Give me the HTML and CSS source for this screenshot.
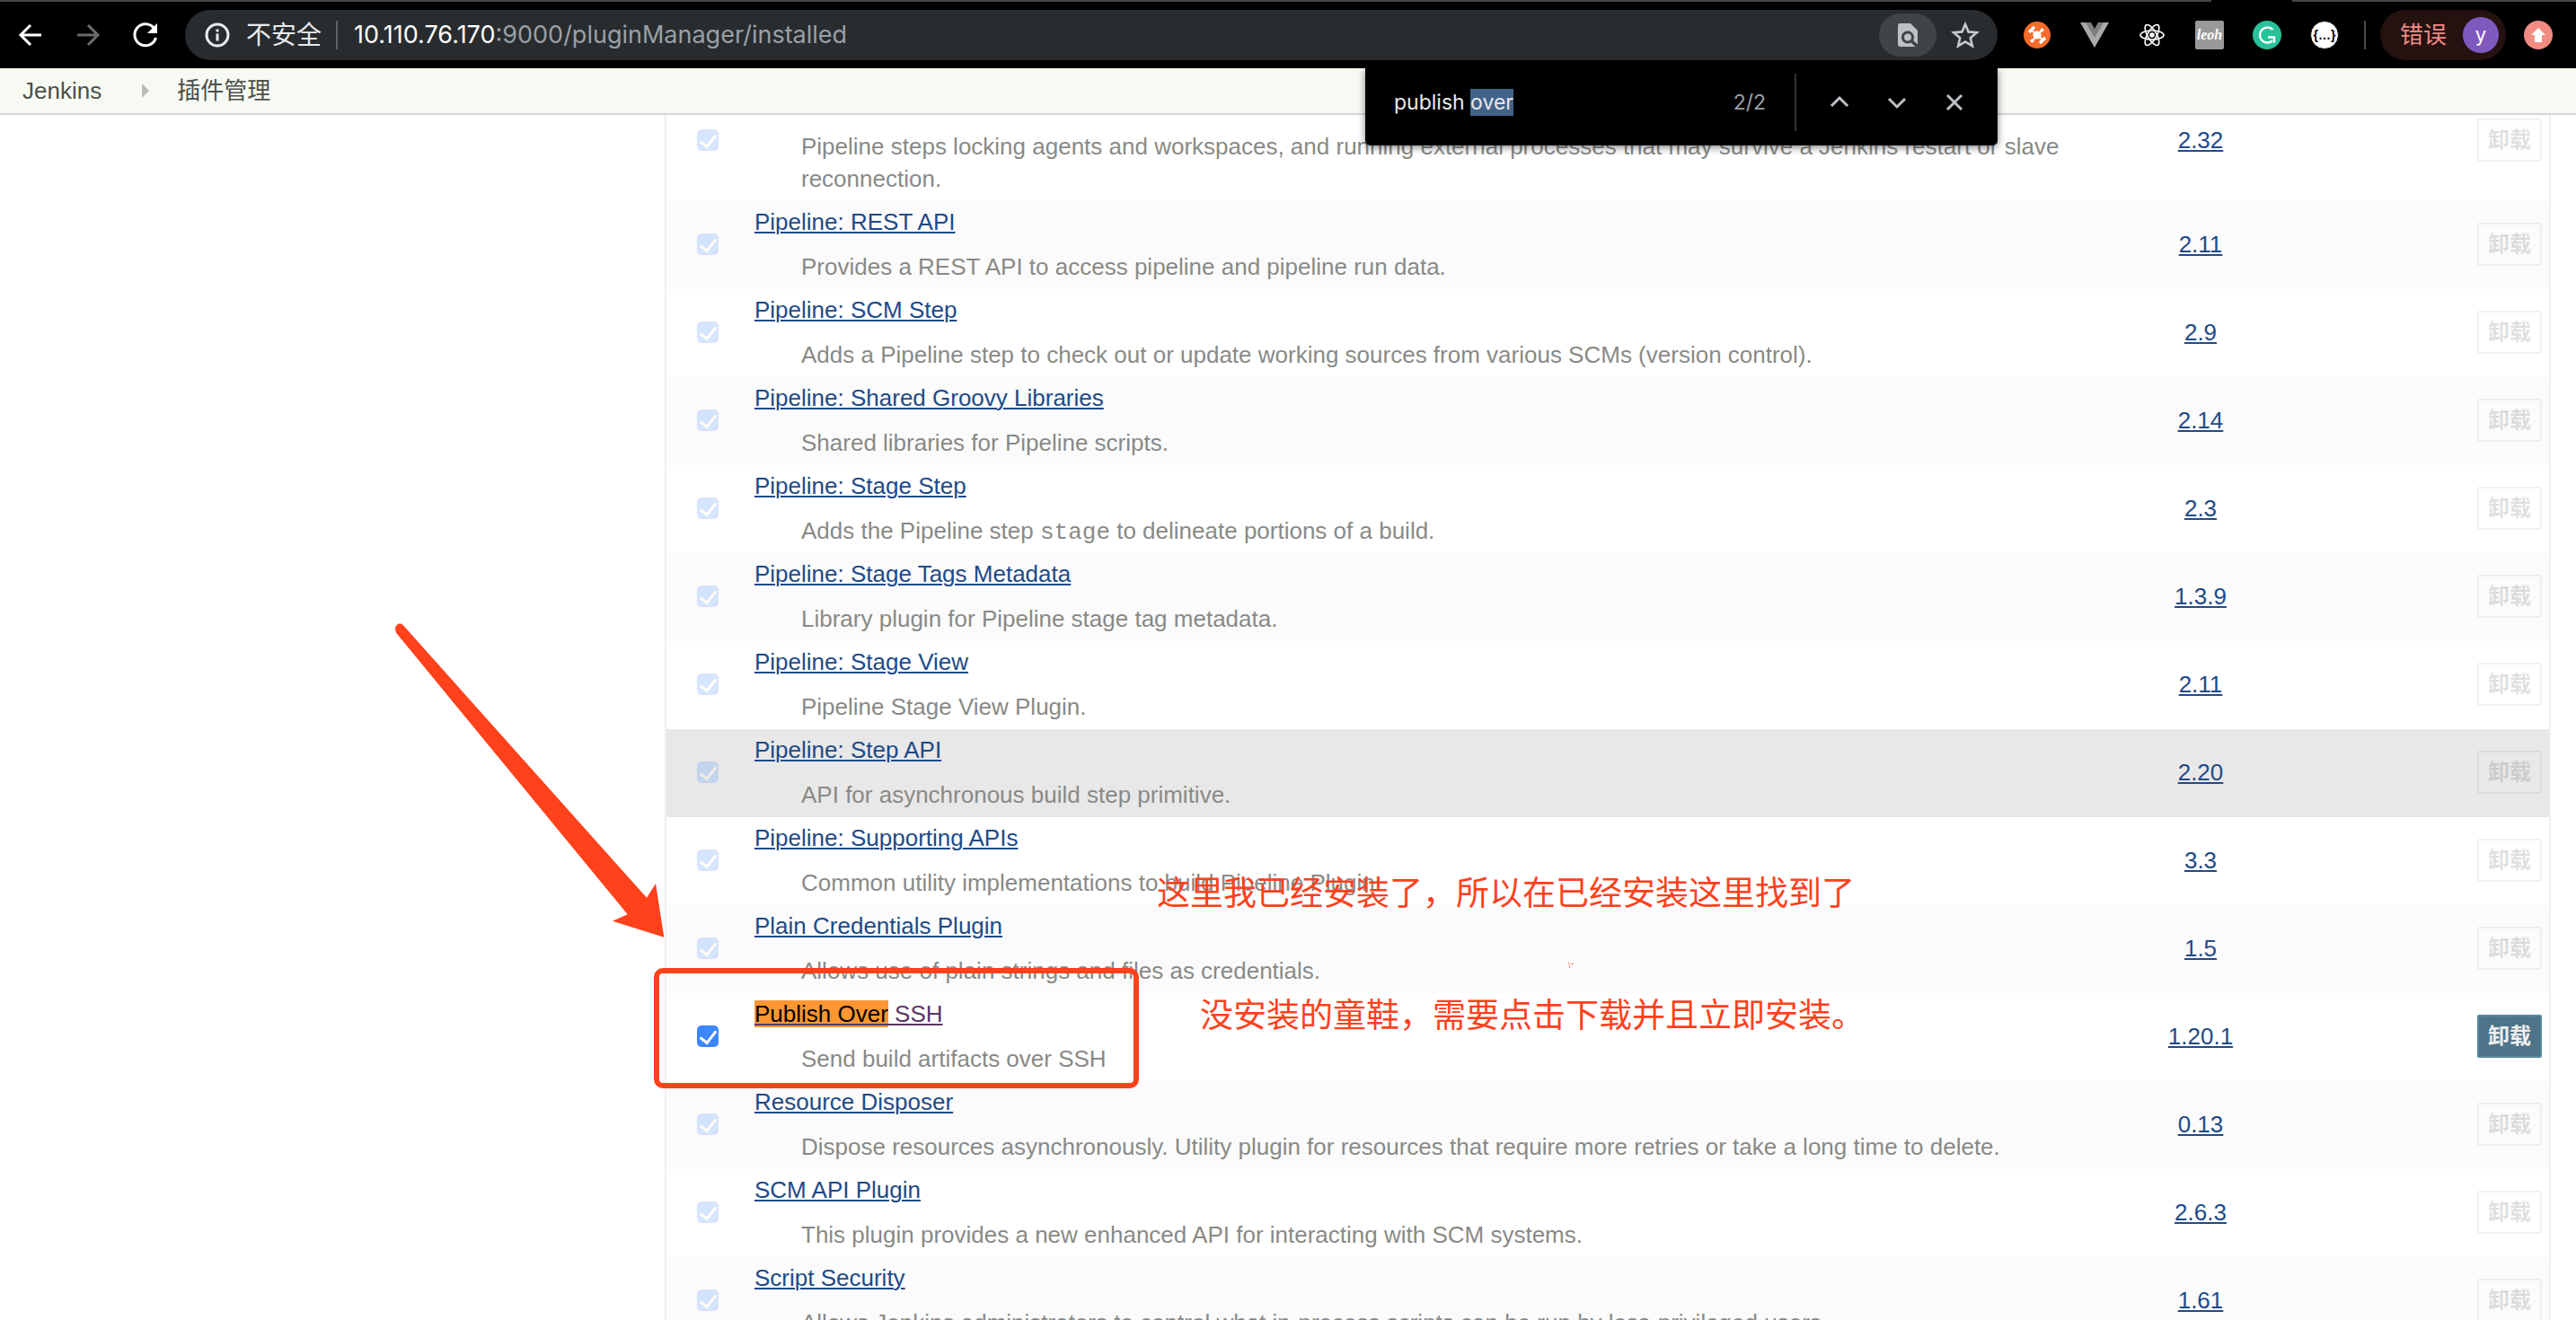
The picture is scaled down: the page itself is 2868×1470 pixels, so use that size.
FILE: index.html
```html
<!DOCTYPE html>
<html lang="zh-CN">
<head>
<meta charset="utf-8">
<title>插件管理 [Jenkins]</title>
<link rel="stylesheet" href="styles.css">
</head>
<body>
<header class="toolbar">
  <span class="tab-foot"></span>
  <nav class="nav">
    <button class="icon-btn" aria-label="Back"><svg width="32" height="32" viewBox="0 0 32 32" fill="none" stroke="#fff" stroke-width="3"><path d="M28 16H6M16 5L5 16l11 11"/></svg></button>
    <button class="icon-btn" aria-label="Forward"><svg width="32" height="32" viewBox="0 0 32 32" fill="none" stroke="#6b6b6b" stroke-width="3"><path d="M4 16h22M16 5l11 11-11 11"/></svg></button>
    <button class="icon-btn" aria-label="Reload"><svg width="32" height="32" viewBox="0 0 32 32"><path d="M25.500 8.500A12 12 0 1 0 27.500 19" fill="none" stroke="#fff" stroke-width="3"/><path d="M29 3v11H18z" fill="#fff"/></svg></button>
  </nav>
  <div class="omnibox">
    <svg width="28" height="28" viewBox="0 0 28 28" fill="none" stroke="#e8eaed" stroke-width="3"><circle cx="14" cy="14" r="12"/><path d="M14 12.500v8M14 7.500v3"/></svg>
    <span class="insecure">不安全</span>
    <span class="omni-rule"></span>
    <div class="url" role="textbox" aria-label="Address"><b>10.110.76.170</b>:9000/pluginManager/installed</div>
    <button class="find-chip" aria-label="Find in page"><svg width="32" height="32" viewBox="0 0 32 32"><path d="M8 3h11l8 8v15.500L22 22a7 7 0 1 0-2.500 2.500L24.500 29H8a3 3 0 0 1-3-3V6a3 3 0 0 1 3-3z" fill="#bdc1c6"/><circle cx="16" cy="18.500" r="4" fill="#bdc1c6"/></svg></button>
    <button class="icon-btn" aria-label="Bookmark"><svg width="32" height="32" viewBox="0 0 32 32" fill="none" stroke="#c6c9cc" stroke-width="2.600"><path d="M16 4l3.600 8.400 9.200.8-7 6 2.100 9L16 23.400l-7.900 4.800 2.100-9-7-6 9.200-.8z"/></svg></button>
  </div>
  <div class="extensions">
    <button class="icon-btn" aria-label="Orange hub"><svg width="32" height="32" viewBox="0 0 32 32"><circle cx="16" cy="16" r="15" fill="#f76b2c"/><g stroke="#fff" fill="none"><path d="M9 10l14 12M21 11l-10 11" stroke-width="2"/><path d="M7 13l6-6M19 25l6-6" stroke-width="3.500"/></g><g fill="#fff"><circle cx="16" cy="16" r="4.600"/><circle cx="21.500" cy="10.500" r="2"/><circle cx="10.500" cy="22.500" r="2"/></g></svg></button>
    <button class="icon-btn" aria-label="Vue"><svg width="32" height="32" viewBox="0 0 32 32"><path d="M0 2h32L16 30z" fill="#a9a9a9"/><path d="M6 2h20L16 19z" fill="#7d7d7d"/><path d="M12 2h8l-4 7z" fill="#000"/></svg></button>
    <button class="icon-btn" aria-label="React"><svg width="32" height="32" viewBox="0 0 32 32" fill="none" stroke="#fff" stroke-width="1.600"><ellipse cx="16" cy="16" rx="13" ry="5"/><ellipse cx="16" cy="16" rx="13" ry="5" transform="rotate(60 16 16)"/><ellipse cx="16" cy="16" rx="13" ry="5" transform="rotate(120 16 16)"/><circle cx="16" cy="16" r="2" fill="#fff"/></svg></button>
    <button class="icon-btn leoh">leoh</button>
    <button class="icon-btn" aria-label="Grammarly"><svg width="32" height="32" viewBox="0 0 32 32"><circle cx="16" cy="16" r="16" fill="#27c29b"/><path d="M22.500 10A8.500 8.500 0 1 0 22 22.500M17 18.500h7v6" fill="none" stroke="#fff" stroke-width="2.400"/></svg></button>
    <button class="icon-btn json">{…}</button>
  </div>
  <span class="bar-rule"></span>
  <button class="profile"><span>错误</span><span class="avatar">y</span></button>
  <button class="icon-btn update" aria-label="Update"><svg width="32" height="32" viewBox="0 0 32 32"><circle cx="16" cy="16" r="16" fill="#f28b82"/><path d="M16 8l8 8h-4v8h-8v-8H8z" fill="#fff"/></svg></button>

  <form class="findbar">
    <input class="find-input" type="text" value="publish over" aria-label="Find">
    <span class="find-count">2/2</span>
    <span class="find-rule"></span>
    <button type="button" class="icon-btn" aria-label="Previous"><svg width="32" height="32" viewBox="0 0 32 32" fill="none" stroke="#bdc1c6" stroke-width="3"><path d="M7 20l9-9 9 9"/></svg></button>
    <button type="button" class="icon-btn" aria-label="Next"><svg width="32" height="32" viewBox="0 0 32 32" fill="none" stroke="#bdc1c6" stroke-width="3"><path d="M7 12l9 9 9-9"/></svg></button>
    <button type="button" class="icon-btn" aria-label="Close"><svg width="32" height="32" viewBox="0 0 32 32" fill="none" stroke="#bdc1c6" stroke-width="3"><path d="M8 8l16 16M24 8L8 24"/></svg></button>
  </form>
</header>

<nav class="breadcrumbs">
  <a href="#">Jenkins</a>
  <svg width="8" height="16" viewBox="0 0 8 16"><path d="M0 0l8 8-8 8z" fill="#babdb6"/></svg>
  <a href="#">插件管理</a>
</nav>

<main class="page">
  <aside class="side"></aside>
  <table class="plugins">
    <colgroup><col class="c-check"><col><col class="c-version"><col class="c-previous"><col class="c-action"></colgroup>
    <tbody>
      <tr><td><input type="checkbox" checked disabled aria-label="Pipeline: Nodes and Processes"></td><td><a href="#">Pipeline: Nodes and Processes</a><p>Pipeline steps locking agents and workspaces, and running external processes that may survive a Jenkins restart or slave reconnection.</p></td><td class="version"><a href="#">2.32</a></td><td></td><td><button class="uninstall" disabled>卸载</button></td></tr>
      <tr><td><input type="checkbox" checked disabled aria-label="Pipeline: REST API"></td><td><a href="#">Pipeline: REST API</a><p>Provides a REST API to access pipeline and pipeline run data.</p></td><td class="version"><a href="#">2.11</a></td><td></td><td><button class="uninstall" disabled>卸载</button></td></tr>
      <tr><td><input type="checkbox" checked disabled aria-label="Pipeline: SCM Step"></td><td><a href="#">Pipeline: SCM Step</a><p>Adds a Pipeline step to check out or update working sources from various SCMs (version control).</p></td><td class="version"><a href="#">2.9</a></td><td></td><td><button class="uninstall" disabled>卸载</button></td></tr>
      <tr><td><input type="checkbox" checked disabled aria-label="Pipeline: Shared Groovy Libraries"></td><td><a href="#">Pipeline: Shared Groovy Libraries</a><p>Shared libraries for Pipeline scripts.</p></td><td class="version"><a href="#">2.14</a></td><td></td><td><button class="uninstall" disabled>卸载</button></td></tr>
      <tr><td><input type="checkbox" checked disabled aria-label="Pipeline: Stage Step"></td><td><a href="#">Pipeline: Stage Step</a><p>Adds the Pipeline step <code>stage</code> to delineate portions of a build.</p></td><td class="version"><a href="#">2.3</a></td><td></td><td><button class="uninstall" disabled>卸载</button></td></tr>
      <tr><td><input type="checkbox" checked disabled aria-label="Pipeline: Stage Tags Metadata"></td><td><a href="#">Pipeline: Stage Tags Metadata</a><p>Library plugin for Pipeline stage tag metadata.</p></td><td class="version"><a href="#">1.3.9</a></td><td></td><td><button class="uninstall" disabled>卸载</button></td></tr>
      <tr><td><input type="checkbox" checked disabled aria-label="Pipeline: Stage View"></td><td><a href="#">Pipeline: Stage View</a><p>Pipeline Stage View Plugin.</p></td><td class="version"><a href="#">2.11</a></td><td></td><td><button class="uninstall" disabled>卸载</button></td></tr>
      <tr class="hovered"><td><input type="checkbox" checked disabled aria-label="Pipeline: Step API"></td><td><a href="#">Pipeline: Step API</a><p>API for asynchronous build step primitive.</p></td><td class="version"><a href="#">2.20</a></td><td></td><td><button class="uninstall" disabled>卸载</button></td></tr>
      <tr><td><input type="checkbox" checked disabled aria-label="Pipeline: Supporting APIs"></td><td><a href="#">Pipeline: Supporting APIs</a><p>Common utility implementations to build Pipeline Plugin</p></td><td class="version"><a href="#">3.3</a></td><td></td><td><button class="uninstall" disabled>卸载</button></td></tr>
      <tr><td><input type="checkbox" checked disabled aria-label="Plain Credentials Plugin"></td><td><a href="#">Plain Credentials Plugin</a><p>Allows use of plain strings and files as credentials.</p></td><td class="version"><a href="#">1.5</a></td><td></td><td><button class="uninstall" disabled>卸载</button></td></tr>
      <tr><td><input type="checkbox" checked aria-label="Publish Over SSH"></td><td><a class="seen" href="#"><mark>Publish Over</mark> SSH</a><p>Send build artifacts over SSH</p></td><td class="version"><a href="#">1.20.1</a></td><td></td><td><button class="uninstall">卸载</button></td></tr>
      <tr><td><input type="checkbox" checked disabled aria-label="Resource Disposer"></td><td><a href="#">Resource Disposer</a><p>Dispose resources asynchronously. Utility plugin for resources that require more retries or take a long time to delete.</p></td><td class="version"><a href="#">0.13</a></td><td></td><td><button class="uninstall" disabled>卸载</button></td></tr>
      <tr><td><input type="checkbox" checked disabled aria-label="SCM API Plugin"></td><td><a href="#">SCM API Plugin</a><p>This plugin provides a new enhanced API for interacting with SCM systems.</p></td><td class="version"><a href="#">2.6.3</a></td><td></td><td><button class="uninstall" disabled>卸载</button></td></tr>
      <tr><td><input type="checkbox" checked disabled aria-label="Script Security"></td><td><a href="#">Script Security</a><p>Allows Jenkins administrators to control what in-process scripts can be run by less-privileged users.</p></td><td class="version"><a href="#">1.61</a></td><td></td><td><button class="uninstall" disabled>卸载</button></td></tr>
    </tbody>
  </table>
</main>

<svg class="arrow" width="300" height="350" viewBox="0 0 300 350"><path d="M9.300 6.700L280 309.700l10-15.700 9.300 59.700L242 335.700l16.700-7.400L1.700 15.500C-3 8 4 1 9.300 6.700z" fill="#ff411c"/></svg>
<div class="frame"></div>
<svg class="speck" width="6" height="6" viewBox="0 0 6 6" fill="none" stroke="#ff8a70"><path d="M.5 0v2M1.500 3v3M3 1.500h3" /></svg>
<p class="note note-a">这里我已经安装了，所以在已经安装这里找到了</p>
<p class="note note-b">没安装的童鞋，需要点击下载并且立即安装。</p>

<script src="find.js"></script>
</body>
</html>
```
FILE: styles.css
```css
* { box-sizing: border-box; }
body {
  margin: 0;
  height: 100vh;
  overflow: hidden;
  position: relative;
  display: flex;
  flex-direction: column;
  background: #fff;
  font: 26px/36px "Liberation Sans", "Noto Sans CJK SC", sans-serif;
}
button { font: inherit; border: 0; background: none; padding: 0; }
svg { display: block; flex: none; overflow: visible; }

/* browser toolbar */
.toolbar {
  position: relative;
  z-index: 3;
  display: flex;
  align-items: center;
  flex: none;
  height: 76px;
  padding: 0 26px 0 18px;
  background: #000;
  border-top: 2px solid #454545;
  font-family: Inter, "Noto Sans CJK SC", sans-serif;
}
.tab-foot { position: absolute; top: -2px; right: 316px; width: 90px; height: 2px; background: #000; }
.nav { display: flex; gap: 32px; }
.icon-btn { flex: none; width: 32px; height: 32px; }
.omnibox {
  flex: 1;
  display: flex;
  align-items: center;
  height: 56px;
  margin-left: 28px;
  padding: 0 20px 0 22px;
  border-radius: 28px;
  background: #282c2f;
  color: #e8eaed;
}
.insecure { margin-left: 18px; font-size: 28px; }
.omni-rule { width: 2px; height: 32px; margin: 0 18px 0 16px; background: #5f6368; }
.url { flex: 1; font-size: 27px; color: #9aa0a6; white-space: nowrap; }
.url b { font-weight: 400; color: #fff; }
.find-chip { display: grid; place-items: center; width: 64px; height: 48px; margin-right: 16px; border-radius: 24px; background: #404447; }
.extensions { display: flex; gap: 32px; margin-left: 28px; }
.leoh { border-radius: 2px; background: #999; color: #fff; font: italic 700 16px/32px "Liberation Serif", serif; text-align: center; }
.json { border: 1px solid #000; border-radius: 50%; background: #fff; color: #000; font: 700 14px/28px "Liberation Sans", sans-serif; text-align: center; }
.bar-rule { width: 2px; height: 32px; margin: 0 16px 0 28px; background: #4a4a4a; }
.profile {
  display: flex;
  align-items: center;
  gap: 18px;
  height: 56px;
  padding: 0 8px 0 22px;
  margin-right: 20px;
  border-radius: 28px;
  background: #241211;
  color: #f28b82;
}
.avatar { width: 40px; height: 40px; border-radius: 50%; background: #8059bf; color: #fff; font-size: 22px; line-height: 38px; }

/* find in page */
.findbar {
  position: absolute;
  top: 74px;
  right: 644px;
  display: flex;
  align-items: center;
  width: 704px;
  height: 86px;
  padding: 0 32px 10px;
  border-radius: 0 0 6px 6px;
  background: #000;
  box-shadow: 0 2px 8px rgba(0, 0, 0, .5);
}
.findbar .icon-btn + .icon-btn { margin-left: 32px; }
.find-input { flex: 1; min-width: 0; padding: 0; border: 0; outline: 0; background: none; color: #e8eaed; font: 23px/30px Inter, sans-serif; }
.find-input::selection { background: #41638b; color: #e8eaed; }
.find-count { font-size: 23px; color: #9aa0a6; }
.find-rule { width: 2px; height: 64px; margin: 0 32px; background: #303336; }

/* breadcrumbs */
.breadcrumbs {
  position: relative;
  z-index: 2;
  flex: none;
  display: flex;
  align-items: center;
  height: 52px;
  padding: 0 25px;
  background: #f6faf2;
  border-bottom: 2px solid #d3d7cf;
}
.breadcrumbs a { color: #4d4f4b; text-decoration: none; }
.breadcrumbs svg { margin: 0 31px 0 45px; }

/* plugin table, scrolled part-way down */
.page { display: flex; align-items: flex-start; margin-top: -38px; padding-right: 28px; }
.side { flex: none; width: 740px; }
.plugins {
  flex: 1;
  width: 100%;
  table-layout: fixed;
  border-spacing: 0;
  border: solid #f0f0f0;
  border-width: 0 2px;
}
.c-check { width: 90px; }
.c-version { width: 280px; }
.c-previous { width: 160px; }
.c-action { width: 88px; }
.plugins td { padding: 5px 8px 7px; vertical-align: middle; }
.plugins td:first-child { padding-left: 34px; }
.plugins tr:nth-child(even) { background: #fbfbfb; }
.plugins tr.hovered { background: #e8e8e8; }
.plugins a { color: #204a87; text-decoration-thickness: 2px; text-underline-offset: 2px; }
.plugins a.seen { color: #5c3566; }
.plugins mark { background: #ff9632; color: #000; }
.plugins p { margin: 14px 0 0 52px; color: #888a85; }
.plugins code { font: 26px/30px "Liberation Mono", monospace; }
.version { text-align: center; }
.plugins input {
  appearance: none;
  display: grid;
  place-items: center;
  width: 24px;
  height: 24px;
  margin: 0;
  border-radius: 5px;
  background: #3b87fd;
}
.plugins input::after {
  content: "";
  width: 8px;
  height: 15px;
  margin-top: -3px;
  border: solid #fff;
  border-width: 0 3px 3px 0;
  transform: rotate(38deg);
}
.plugins input:disabled { opacity: .2; }
.uninstall {
  display: block;
  width: 72px;
  height: 48px;
  border: 2px solid #5788a1;
  border-radius: 2px;
  background: #4d7489;
  color: #eee;
  font: 700 24px/40px "Liberation Sans", "Noto Sans CJK SC", sans-serif;
}
.uninstall:disabled { border-color: rgba(0, 0, 0, .05); background: none; color: rgba(0, 0, 0, .14); }

/* hand-drawn marks over the page */
.arrow { position: absolute; left: 440px; top: 690px; }
.frame { position: absolute; left: 728px; top: 1078px; width: 540px; height: 134px; border: 6px solid #ff411c; border-radius: 10px; }
.speck { position: absolute; left: 1746px; top: 1072px; }
.note { position: absolute; margin: 0; color: #ff411c; font: 37px/48px "Noto Sans CJK SC", sans-serif; white-space: nowrap; }
.note-a { left: 1288px; top: 968px; }
.note-b { left: 1336px; top: 1104px; }
```
FILE: find.js
```js
const field = document.querySelector('.find-input');
field.focus();
field.setSelectionRange(8, 12);
```
